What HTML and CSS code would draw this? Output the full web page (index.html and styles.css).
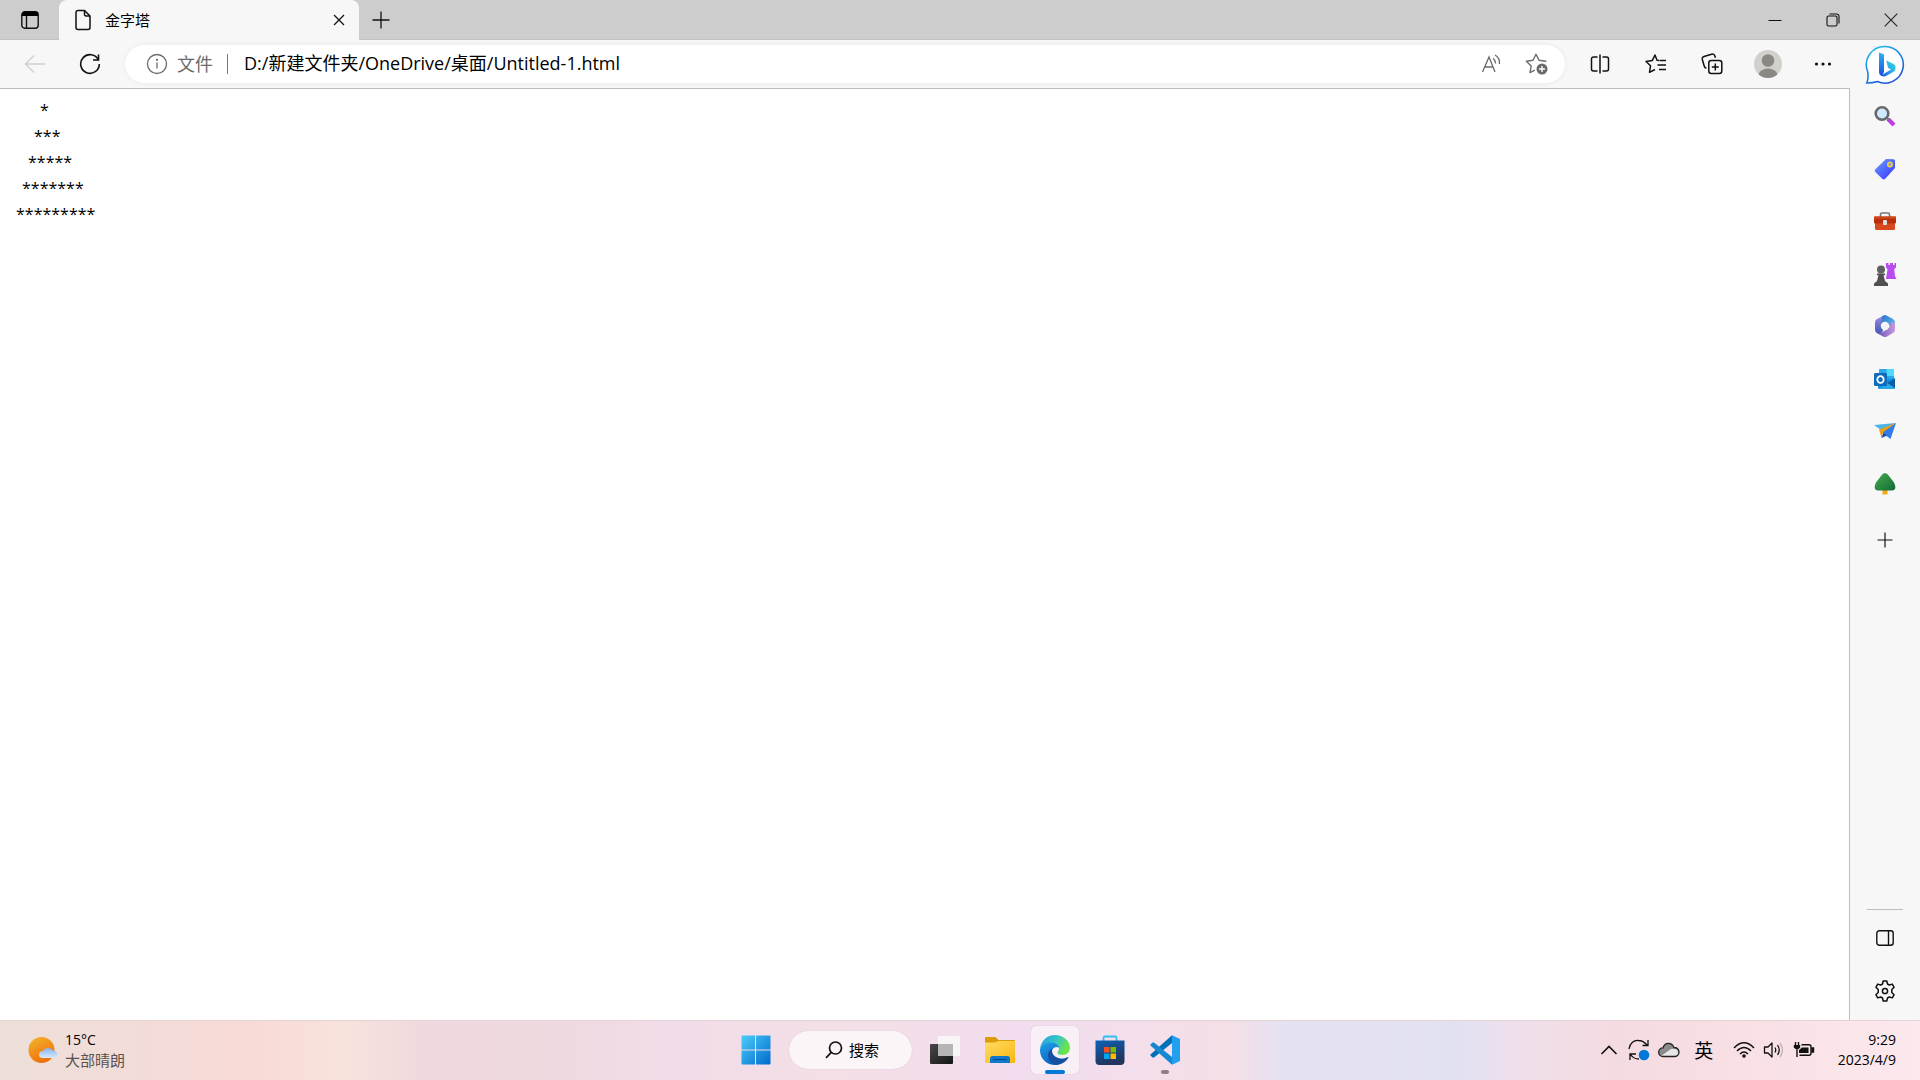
FILE: index.html
```
<!DOCTYPE html>
<html lang="zh-CN">
<head>
<meta charset="utf-8">
<meta name="viewport" content="width=device-width, initial-scale=1">
<title>金字塔</title>
<link rel="stylesheet" href="styles.css">
</head>
<body>
<div class="desktop">
  <header class="titlebar">
    <button class="tab-menu" aria-label="标签操作菜单">
      <svg width="18" height="18" viewBox="0 0 18 18" fill="none" stroke="#111" stroke-width="1.4"><rect x=".8" y=".8" width="16.4" height="16.4" rx="3"/><path d="M1 3.5a3 3 0 0 1 3-3h10a3 3 0 0 1 3 3V5H1z" fill="#000" stroke="none"/><path d="M5.5 5v12"/></svg>
    </button>
    <div class="tab">
      <svg width="18" height="22" viewBox="0 0 18 22" fill="none" stroke="#111" stroke-width="1.5" stroke-linejoin="round"><path d="M4 1.5h6.5L16 7v11.5a2 2 0 0 1-2 2H4a2 2 0 0 1-2-2v-15a2 2 0 0 1 2-2z"/><path d="M10.500 1.500V5.500a1.500 1.500 0 0 0 1.500 1.500H16"/></svg>
      <span class="tab-title">金字塔</span>
      <button class="tab-close" aria-label="关闭标签页"><svg width="12" height="12" viewBox="0 0 12 12" fill="none" stroke="#111" stroke-width="1.3"><path d="M1 1l10 10M11 1L1 11"/></svg></button>
    </div>
    <button class="new-tab" aria-label="新建标签页"><svg width="18" height="18" viewBox="0 0 18 18" fill="none" stroke="#111" stroke-width="1.3"><path d="M9 .5v17M.5 9h17"/></svg></button>
    <div class="window-buttons">
      <button aria-label="最小化"><svg width="14" height="14" viewBox="0 0 14 14" stroke="#111"><path d="M.5 7.500h13"/></svg></button>
      <button aria-label="还原"><svg width="14" height="14" viewBox="0 0 14 14" fill="none" stroke="#111" stroke-width="1.100"><rect x="1" y="3" width="10" height="10" rx="1.500"/><path d="M3.500 1h7a2.500 2.500 0 0 1 2.500 2.500v7"/></svg></button>
      <button aria-label="关闭"><svg width="14" height="14" viewBox="0 0 14 14" fill="none" stroke="#222" stroke-width="1.100"><path d="M.7.7l12.600 12.600M13.300.7L.7 13.300"/></svg></button>
    </div>
  </header>

  <div class="browser">
    <div class="main">
      <nav class="toolbar">
        <button class="nav-button" aria-label="后退"><svg width="22" height="20" viewBox="0 0 22 20" fill="none" stroke="#d0d0d0" stroke-width="1.500"><path d="M21 10H2M10 1.500L1.500 10l8.500 8.500"/></svg></button>
        <button class="nav-button" aria-label="刷新"><svg width="22" height="22" viewBox="0 0 22 22" fill="none" stroke="#111" stroke-width="1.600"><path d="M19.400 7A9.300 9.300 0 1 0 20.300 11"/><path d="M19.500 1.500V7h-5.500"/></svg></button>
        <div class="address">
          <button class="site-info"><svg width="22" height="22" viewBox="0 0 22 22" fill="none" stroke="#6b6b6b" stroke-width="1.300"><circle cx="11" cy="11" r="9.500"/><path d="M11 9.500v6"/><circle cx="11" cy="6.800" r=".5" fill="#6b6b6b"/></svg><span>文件</span></button>
          <span class="separator"></span>
          <input class="url" type="text" aria-label="地址栏" value="D:/新建文件夹/OneDrive/桌面/Untitled-1.html">
          <button class="address-action" aria-label="大声朗读"><svg width="22" height="20" viewBox="0 0 22 20" fill="none" stroke="#6b6b6b" stroke-width="1.300"><path d="M1.500 18L8 3l6 15M3.500 13h8.500"/><path d="M12 4.500q2.500 1.500 2.500 5M14 1q5 3 4.500 9"/></svg></button>
          <button class="address-action" aria-label="添加到收藏夹"><svg width="24" height="22" viewBox="0 0 24 22" fill="none" stroke="#6b6b6b" stroke-width="1.400" stroke-linejoin="round"><path d="M20.500 9l.2-.8-6.700-1L11 1.200 8 7.200l-6.700 1 4.900 4.700L5 19.600l4.800-2.500"/><circle cx="17" cy="16" r="5.500" fill="#6b6b6b" stroke="none"/><path d="M17 13v6M14 16h6" stroke="#fff"/></svg></button>
        </div>
        <div class="tools">
          <button aria-label="拆分窗口"><svg width="20" height="20" viewBox="0 0 20 20" fill="none" stroke="#111" stroke-width="1.500"><path d="M7.500 3h-4a2 2 0 0 0-2 2v10a2 2 0 0 0 2 2h4M12.500 3h4a2 2 0 0 1 2 2v10a2 2 0 0 1-2 2h-4M10 .500v19"/></svg></button>
          <button aria-label="收藏夹"><svg width="22" height="20" viewBox="0 0 22 20" fill="none" stroke="#111" stroke-width="1.500" stroke-linejoin="round"><path d="M14 6.500l-2-.2L10 1 7.200 6.600 1 7.500l4.500 4.300-1 6.500L10 15.500M14.500 6.500H21M12.500 11H21M14 15.500h7"/></svg></button>
          <button aria-label="集锦"><svg width="22" height="22" viewBox="0 0 22 22" fill="none" stroke="#111" stroke-width="1.500"><rect x="7.800" y="7.500" width="13" height="13" rx="2.500"/><path d="M14.300 10.500v7M10.800 14h7M5.500 15c-1.400 0-2-.7-2.300-2L1.300 6.500C1 5 1.500 4 3 3.500l7.500-2.200c1.700-.5 3 0 3.500 2l.4 1.500"/></svg></button>
          <button aria-label="个人资料"><svg width="28" height="28" viewBox="0 0 28 28"><clipPath id="avatar"><circle cx="14" cy="14" r="14"/></clipPath><g clip-path="url(#avatar)"><path d="M0 0h28v28H0z" fill="#d2d0cd"/><circle cx="14" cy="10.500" r="6.300" fill="#8b8783"/><path d="M4 28c0-6 4-9.500 10-9.500S24 22 24 28z" fill="#8b8783"/></g></svg></button>
          <button class="more" aria-label="设置及其他"><svg width="18" height="18" viewBox="0 0 18 18" fill="#111"><circle cx="2.500" cy="9" r="1.600"/><circle cx="9" cy="9" r="1.600"/><circle cx="15.500" cy="9" r="1.600"/></svg></button>
        </div>
      </nav>
      <main class="page">
        <p class="row" style="--indent:4">*</p>
        <p class="row" style="--indent:3">***</p>
        <p class="row" style="--indent:2">*****</p>
        <p class="row" style="--indent:1">*******</p>
        <p class="row" style="--indent:0">*********</p>
      </main>
    </div>

    <aside class="sidebar">
      <button class="bing" aria-label="发现"><svg width="40" height="40" viewBox="0 0 40 40"><defs><linearGradient id="bing-ring" x1="0" y1="0" x2=".6" y2="1"><stop offset="0" stop-color="#18c6ee"/><stop offset="1" stop-color="#1c54d8"/></linearGradient><linearGradient id="bing-stem" x1="0" y1="0" x2="0" y2="1"><stop offset="0" stop-color="#2cb2f2"/><stop offset="1" stop-color="#1b4fdd"/></linearGradient><linearGradient id="bing-bowl" x1="1" y1="0" x2="0" y2="1"><stop offset="0" stop-color="#35e0d8"/><stop offset=".5" stop-color="#2aa9f0"/><stop offset="1" stop-color="#1c4fdc"/></linearGradient></defs><path d="M20 1.500A18.300 18.300 0 1 1 12.500 36.500C9 37.500 5 38 1.800 38 3.300 35 3.200 31 2.800 27A18.300 18.300 0 0 1 20 1.500z" fill="#fff" stroke="url(#bing-ring)" stroke-width="1.600"/><path d="M14 7.500l4.200 1.600c.6.300.8.700.8 1.300v16.500l-2 4.200c-2-.6-3-2.200-3-4z" fill="url(#bing-stem)"/><path d="M21.300 15.500l6.400 3.100c2.600 1.200 3.300 3 2.800 5.300-.2 1.200-1 2.200-2 2.900l-7 4c-2 1.100-4.200 1-5.700-.4L26 24.500l-3-1.800z" fill="url(#bing-bowl)"/></svg></button>
      <div class="apps">
        <button aria-label="搜索"><svg width="22" height="22" viewBox="0 0 22 22"><path d="M14 14l6 6" stroke="#bf3be8" stroke-width="4"/><path d="M12.500 12.500l2.500 2.500" stroke="#777" stroke-width="2"/><circle cx="8" cy="8.500" r="6.300" fill="#cdeaff" stroke="#686868" stroke-width="2.600"/></svg></button>
        <button aria-label="购物"><svg width="22" height="22" viewBox="0 0 22 22"><linearGradient id="tag" x1="0" y1="0" x2="1" y2="1"><stop offset="0" stop-color="#67a2ff"/><stop offset="1" stop-color="#3c2fff"/></linearGradient><path d="M12 1l7.500.2q1.500 0 1.500 1.500V10L11 21q-1.500 1-2.800-.3L1.300 14Q.2 12.700 1.300 11.300z" fill="url(#tag)"/><circle cx="16" cy="6.500" r="2.200" fill="#8d9ec9" stroke="#f4d33e" stroke-width="1.500"/></svg></button>
        <button aria-label="工具"><svg width="24" height="20" viewBox="0 0 24 20"><path d="M7.500 6V3.500q0-1.500 1.500-1.500h6q1.500 0 1.500 1.500V6" fill="none" stroke="#777" stroke-width="1.600"/><rect x="2" y="8" width="20" height="11" rx="1.500" fill="#d8481c"/><rect x="1" y="5.500" width="22" height="7" rx="1" fill="#b92f0c"/><rect x="1" y="5.500" width="22" height="2" fill="#cf4a18"/><rect x="10" y="9" width="4" height="5" rx=".8" fill="#ddd"/></svg></button>
        <button aria-label="游戏"><svg width="24" height="24" viewBox="0 0 24 24"><path d="M13 1h2.500v2H17V1h3v2h1.500V1H23v4.500l-1.800 1.700.8 6.800 1.500 3H13l1.500-9.800L13 5.500z" fill="#b94cf0"/><circle cx="8" cy="7.500" r="4" fill="#606060"/><path d="M4 11.500h8v1.700h-1.500L12 19l3 2.500V24H1v-2.500L4 19l1.500-5.800H4z" fill="#505050"/></svg></button>
        <button aria-label="Microsoft 365"><svg width="22" height="24" viewBox="0 0 22 24"><defs><linearGradient id="m365-left" x1="0" y1="0" x2="0" y2="1"><stop offset="0" stop-color="#a78be0"/><stop offset="1" stop-color="#3a58b8"/></linearGradient><linearGradient id="m365-right" x1="0" y1="0" x2="1" y2="1"><stop offset="0" stop-color="#2f6fcf"/><stop offset="1" stop-color="#62c8ee"/></linearGradient><linearGradient id="m365-base" x1="0" y1="0" x2="1" y2="0"><stop offset="0" stop-color="#6b4fb5"/><stop offset="1" stop-color="#c79ae0"/></linearGradient></defs><path d="M11 1L3 5Q1 6.200 1 8.500v7Q1 18 3 19l3 1.500 3-4V7z" fill="url(#m365-left)"/><path d="M8 2.200l1.500-.8q1.500-.8 3 0L19 5q2 1.200 2 3.500V15l-7-3.500L7.500 9z" fill="url(#m365-right)"/><path d="M21 9v6.500q0 2.500-2 3.500l-6 3.500q-2 1-4 0L3 19q5 0 8-2.500l5-4 1-5z" fill="url(#m365-base)"/><circle cx="11" cy="12" r="4.200" fill="#f7f7f7"/></svg></button>
        <button aria-label="Outlook"><svg width="22" height="22" viewBox="0 0 22 22"><rect x="5" y="1" width="15" height="16" rx="1" fill="#28a8ea"/><path d="M12.500 1H19q1 0 1 1v6h-7.500z" fill="#50d9ff"/><path d="M5 6h7.500v7H5z" fill="#0364b8"/><path d="M4 13l17-3v9.500q0 1.500-1.500 1.500h-14Q4 21 4 19.500z" fill="#1490df"/><path d="M21 10.500V20l-8-5z" fill="#0a5ba8"/><path d="M5 21l8-6 8 5.300-1 .7z" fill="#28a8ea"/><rect x="0" y="5" width="13" height="13" rx="1.200" fill="#0f6cbd"/><ellipse cx="6.500" cy="11.500" rx="3.200" ry="3.400" fill="none" stroke="#fff" stroke-width="1.800"/></svg></button>
        <button aria-label="投放"><svg width="22" height="18" viewBox="0 0 22 18"><path d="M0 3l22-2-15 7z" fill="#49b5e8"/><path d="M22 1l-5.500 16L6 9z" fill="#307de9"/><path d="M5 7.500L22 1 9.500 10 7.500 16z" fill="#eb9e18"/><path d="M7.500 16l2-5 3.500 2.500z" fill="#1747a8"/></svg></button>
        <button aria-label="电子树"><svg width="22" height="24" viewBox="0 0 22 24"><linearGradient id="tree" x1="0" y1="0" x2="1" y2="1"><stop offset="0" stop-color="#43ac4c"/><stop offset="1" stop-color="#146b36"/></linearGradient><path d="M8.500 17h5v5.500h-5z" fill="#f5a817"/><path d="M11 1q2 0 4 3l5 6.500Q23.500 17.800 18 18.500H4Q-1.500 17.800 2 10.500L7 4q2-3 4-3z" fill="url(#tree)"/></svg></button>
      </div>
      <button class="add" aria-label="自定义"><svg width="16" height="16" viewBox="0 0 16 16" stroke="#111" stroke-width="1.200"><path d="M8 .5v15M.5 8h15"/></svg></button>
      <div class="side-settings">
        <button aria-label="隐藏边栏"><svg width="18" height="16" viewBox="0 0 18 16" fill="none" stroke="#111" stroke-width="1.400"><rect x=".8" y=".8" width="16.400" height="14.400" rx="2.500"/><path d="M12.500 1v14"/></svg></button>
        <button aria-label="设置"><svg width="22" height="22" viewBox="0 0 22 22" fill="none" stroke="#111" stroke-width="1.500" stroke-linejoin="round"><circle cx="11" cy="11" r="2.600"/><path d="M9.200 1h3.600l.7 3 1.800 1 3-.9 1.800 3.200-2.300 2.200v3l2.300 2.200-1.800 3.200-3-.9-1.800 1-.7 3H9.200l-.7-3-1.800-1-3 .9-1.800-3.200 2.300-2.200v-3L1.900 7.300l1.800-3.200 3 .9 1.800-1z"/></svg></button>
      </div>
    </aside>
  </div>

  <footer class="taskbar">
    <button class="weather">
      <svg width="30" height="28" viewBox="0 0 30 28"><linearGradient id="sun" x1="0" y1="0" x2=".5" y2="1"><stop offset="0" stop-color="#f3b72b"/><stop offset="1" stop-color="#f0700c"/></linearGradient><linearGradient id="haze" x1="0" y1="0" x2="0" y2="1"><stop offset="0" stop-color="#86b4f2"/><stop offset="1" stop-color="#d7eafc"/></linearGradient><circle cx="13.500" cy="14" r="13" fill="url(#sun)"/><path d="M15 22a4 3.500 0 0 1 0-7 5.500 5.500 0 0 1 9.500-.5q4.500 0 4.500 3.700T25 22z" fill="url(#haze)"/></svg>
      <span class="weather-text"><span>15°C</span><span class="weather-state">大部晴朗</span></span>
    </button>
    <div class="pinned">
      <button class="task" aria-label="开始"><svg width="30" height="30" viewBox="0 0 30 30"><linearGradient id="win" x1="0" y1="0" x2="1" y2="1"><stop offset="0" stop-color="#4dcdf9"/><stop offset="1" stop-color="#0069cc"/></linearGradient><path d="M1.500 .5H14v14H.5v-13a1 1 0 0 1 1-1zM15 .5h13.500a1 1 0 0 1 1 1v13H15zM.5 15.500H14v14H1.500a1 1 0 0 1-1-1zM15 15.500h14.500v13a1 1 0 0 1-1 1H15z" fill="url(#win)"/></svg></button>
      <button class="search"><svg width="18" height="18" viewBox="0 0 18 18" fill="none" stroke="#111" stroke-width="1.700"><circle cx="10.500" cy="7" r="6"/><path d="M6.300 11.300L1 16.800"/></svg><span>搜索</span></button>
      <button class="task" aria-label="任务视图"><svg width="30" height="28" viewBox="0 0 30 28"><linearGradient id="desk" x1="0" y1="0" x2="1" y2="1"><stop offset="0" stop-color="#484848"/><stop offset="1" stop-color="#161616"/></linearGradient><rect y="8" width="23" height="20" rx="1" fill="url(#desk)"/><rect x="8" width="22" height="20" rx="1" fill="#f7f7f7" opacity=".9"/><path d="M8 8h15v12H8z" fill="#b5b5b5"/></svg></button>
      <button class="task" aria-label="文件资源管理器"><svg width="30" height="28" viewBox="0 0 30 28"><linearGradient id="folder" x1="0" y1="0" x2="1" y2="1"><stop offset="0" stop-color="#ffdc66"/><stop offset="1" stop-color="#f8b70e"/></linearGradient><path d="M1 1h8.500q1 0 1.700.8L13.500 4H29q1 0 1 1v5H0V2q0-1 1-1z" fill="#dc9b07"/><path d="M0 6.500h9.500L13.500 5H30v22H0z" fill="url(#folder)"/><path d="M5 27v-4.500Q5 20 7.500 20h15q2.500 0 2.500 2.500V27z" fill="#1078ca"/><path d="M8.500 23.500h13" stroke="#06488b"/></svg></button>
      <button class="task active" aria-label="Microsoft Edge"><svg width="30" height="30" viewBox="0 0 30 30"><defs><linearGradient id="edge-top" x1="0" y1="0" x2="1" y2=".4"><stop offset="0" stop-color="#249de0"/><stop offset=".55" stop-color="#35c5c8"/><stop offset="1" stop-color="#6be648"/></linearGradient><linearGradient id="edge-body" x1="0" y1="0" x2=".4" y2="1"><stop offset="0" stop-color="#21a1e8"/><stop offset="1" stop-color="#0b63c7"/></linearGradient></defs><path d="M0 14C1 6 7 0 15 0s15 5.800 15 12.500c0 4.800-3.500 7.500-7.500 7.500-3 0-5-1-5-2.300 0-1 1.500-1.500 1.500-4C19 11 16 8 11 8 5 8 1.500 11 0 14z" fill="url(#edge-top)"/><path d="M0 14.500C1 10 5 7.500 10.500 7.500c5.500 0 8.500 3 8.500 5.500-2-2-6.500-.5-7.500 3.500-1.500 6.500 4 12.500 9.500 11.500C18.500 30 16.500 30 15 30 6.500 30-.5 23 0 14.500z" fill="url(#edge-body)"/><path d="M12.500 13.500c-3 1-4.500 4-4.500 7 0 5 4.500 9.500 9.500 9.200 5-.6 8.500-3 10.700-6.700.4-.8-.2-1.200-.8-.8C21.500 25.500 12 22.500 12 15.500q0-1 .5-2z" fill="#14509f"/></svg></button>
      <button class="task" aria-label="Microsoft Store"><svg width="30" height="30" viewBox="0 0 30 30"><linearGradient id="store" x1="0" y1="0" x2=".4" y2="1"><stop offset="0" stop-color="#0d62b8"/><stop offset="1" stop-color="#21345c"/></linearGradient><path d="M8.500 7V3q0-1.500 1.500-1.500h10q1.500 0 1.500 1.500v4" fill="none" stroke="#30bfef" stroke-width="1.800"/><path d="M.5 5.500h29V26q0 4-4 4h-21q-4 0-4-4z" fill="url(#store)"/><path d="M9 12h5.500v5.500H9z" fill="#f25022"/><path d="M15.500 12H21v5.500h-5.500z" fill="#7fba00"/><path d="M9 18.500h5.500V24H9z" fill="#00a4ef"/><path d="M15.500 18.500H21V24h-5.500z" fill="#ffb900"/></svg></button>
      <button class="task open" aria-label="Visual Studio Code"><svg width="30" height="30" viewBox="0 0 30 30"><path d="M22 .300L30 4v22l-8 3.700z" fill="#22a0f0"/><path d="M0 20l2.500 2.500L4 22.400 22 8V.300L1 19z" fill="#0070b8"/><path d="M0 10l2.500-2.500L4 7.600 22 22v7.700L1 11z" fill="#1488d2"/></svg></button>
    </div>
    <div class="tray">
      <button aria-label="显示隐藏的图标"><svg width="18" height="12" viewBox="0 0 18 12" fill="none" stroke="#111" stroke-width="1.600"><path d="M1.500 10L9 2.500l7.500 7.500"/></svg></button>
      <button aria-label="更新"><svg width="22" height="22" viewBox="0 0 22 22" fill="none" stroke="#111" stroke-width="1.300"><path d="M1 10C2 4 6 1 10.500 1.500c3.500 0 6 1.500 8.500 4.500M20 1v5.500h-5.500M2 21v-6h6M2.500 15.500q3 4.500 8.500 4.500"/><circle cx="16" cy="16" r="5.300" fill="#0078d7" stroke="none"/></svg></button>
      <button aria-label="OneDrive"><svg width="22" height="16" viewBox="0 0 22 16"><path d="M5 14.500a4.300 4.300 0 0 1 0-8.600C7 0 13.500 0 16 5.500c3 0 5 2 5 4.500s-2 4.500-4.500 4.500z" fill="#8b8b8b"/><path d="M3 14l10-7q7-1 7 3.500 0 4-4 4H5z" fill="#e7e7e7"/><path d="M5 14.500a4.300 4.300 0 0 1 0-8.600C7 0 13.500 0 16 5.500c3 0 5 2 5 4.500s-2 4.500-4.500 4.500z" fill="none" stroke="#222" stroke-width="1.300"/></svg></button>
      <button class="ime">英</button>
      <button class="status" aria-label="网络、音量和电池">
        <svg width="22" height="18" viewBox="0 0 22 18" fill="none" stroke="#111" stroke-width="1.500"><path d="M1 7Q11-3.500 21 7M4 10q7-7 14 0M7 13q4-4 8 0"/><circle cx="11" cy="15" r="1.800" fill="#111" stroke="none"/></svg>
        <svg width="22" height="18" viewBox="0 0 22 18" fill="none" stroke="#111" stroke-width="1.300" stroke-linejoin="round"><path d="M1.500 6H5l4-4v14l-4-4H1.500zM12 6.500q1.500 2.500 0 5M14.500 4q3.500 5 0 10"/><path d="M17 2q5 7 0 14" stroke="#bdb2b6"/></svg>
        <svg width="22" height="18" viewBox="0 0 22 18" fill="none" stroke="#111" stroke-width="1.400"><path d="M8.500 3.700h7.500q2 0 2 2v6.600q0 2-2 2H6.500"/><path d="M9 6.500h6.500v5.500H6V9z" fill="#111" stroke="none"/><path d="M19 7h1.500v4H19z" fill="#111"/><path d="M.8 4h6.400v2.500L5.500 8h-3L.8 6.500z" fill="#111" stroke="none"/><path d="M2.500 1v3M5.500 1v3M4 8v8"/></svg>
      </button>
      <button class="clock"><time>9:29</time><time>2023/4/9</time></button>
    </div>
  </footer>
</div>
</body>
</html>
```
FILE: styles.css
```
* {
  box-sizing: border-box;
}

body {
  margin: 0;
  color: #000;
  font-family: "Open Sans", "Noto Sans CJK SC", sans-serif;
}

button,
input {
  margin: 0;
  padding: 0;
  border: 0;
  background: none;
  color: inherit;
  font: inherit;
}

button {
  display: flex;
  align-items: center;
  justify-content: center;
}

svg {
  display: block;
  flex: none;
}

.desktop {
  display: flex;
  flex-direction: column;
  min-height: 100vh;
}

/* Title bar */
.titlebar {
  display: flex;
  height: 40px;
  background: #cdcdcd;
  box-shadow: inset 0 -1px #c2c2c2;
}

.tab-menu {
  width: 59px;
}

.tab {
  display: flex;
  align-items: center;
  gap: 13px;
  width: 300px;
  padding: 0 12px 0 15px;
  border-radius: 8px 8px 0 0;
  background: #f7f7f7;
}

.tab-title {
  flex: 1;
  font-size: 15px;
  line-height: 20px;
}

.tab-close {
  width: 16px;
  height: 24px;
}

.new-tab {
  width: 44px;
}

.window-buttons {
  display: flex;
  margin-left: auto;
}

.window-buttons button {
  width: 58px;
}

/* Browser */
.browser {
  display: flex;
  flex: 1;
  background: #f7f7f7;
}

.main {
  display: flex;
  flex: 1;
  flex-direction: column;
  min-width: 0;
}

.toolbar {
  display: flex;
  align-items: center;
  height: 48px;
  padding-left: 7px;
}

.nav-button {
  width: 55px;
  height: 40px;
}

.address {
  display: flex;
  flex: 1;
  align-items: center;
  height: 38px;
  margin-left: 8px;
  padding: 0 16px 0 21px;
  border-radius: 19px;
  background: #fff;
  box-shadow: 0 0 4px #e6e6e6;
  font-size: 18px;
}

.site-info {
  gap: 9px;
  color: #6b6b6b;
}

.site-info span {
  padding-bottom: 2px;
}

.separator {
  width: 1px;
  height: 20px;
  margin: 0 16px 0 14px;
  background: #777;
}

.url {
  flex: 1;
  min-width: 0;
  height: 34px;
  padding-bottom: 4px;
}

.address-action {
  width: 24px;
  margin-left: 21px;
}

.tools {
  display: flex;
  align-items: center;
  padding-left: 7px;
}

.tools button {
  width: 56px;
  height: 40px;
}

.tools .more {
  width: 54px;
}

.page {
  flex: 1;
  padding: 8px 8px 8px 16px;
  border-top: 1px solid #bdbdbd;
  border-right: 1px solid #bdbdbd;
  background: #fff;
}

.row {
  margin: 0;
  padding-left: calc(var(--indent) * 6px);
  font-size: 16px;
  line-height: 26px;
}

/* Sidebar */
.sidebar {
  display: flex;
  flex-direction: column;
  width: 70px;
}

.bing {
  height: 50px;
}

.apps {
  display: flex;
  flex-direction: column;
  height: 420px;
}

.apps button {
  flex: 1;
}

.add {
  height: 60px;
}

.side-settings {
  display: flex;
  flex-direction: column;
  margin: auto 17px 0;
  padding: 1px 0 3px;
  border-top: 1px solid #bdbdbd;
}

.side-settings button {
  height: 53px;
}

/* Taskbar */
.taskbar {
  display: grid;
  grid-template-columns: 1fr auto 1fr;
  align-items: center;
  height: 60px;
  background: linear-gradient(90deg, #eedfd9 0%, #f2dcd8 7%, #f8dad6 13%, #f8e2dc 18%, #efd9de 22%, #eed9df 28%, #f1dce9 35%, #f3dfe6 43%, #f2ddef 54%, #f4dfe7 64%, #e4e2f2 67%, #e2e1f2 76%, #efdfeb 79%, #f4dbe1 84%, #f8dfe4 90%, #fce9ed 100%);
  box-shadow: inset 0 1px #e6d3d5;
}

.weather {
  gap: 7px;
  justify-self: start;
  padding-left: 28px;
}

.weather-text,
.clock {
  display: flex;
  flex-direction: column;
  font-size: 14px;
  line-height: 20px;
}

.weather-text {
  align-items: flex-start;
}

.weather-state {
  color: #5b5351;
  font-size: 15px;
}

.pinned {
  display: flex;
  align-items: center;
  gap: 7px;
}

.task {
  position: relative;
  width: 48px;
  height: 48px;
  border-radius: 5px;
}

.task.active {
  background: #f9f0f7;
  box-shadow: 0 0 1px #bfaebb;
}

.task.active::after,
.task.open::after {
  position: absolute;
  bottom: 0;
  width: 20px;
  height: 4px;
  border-radius: 2px;
  background: #0078d7;
  content: "";
}

.task.open::after {
  width: 8px;
  background: #8a8185;
}

.search {
  gap: 6px;
  width: 123px;
  height: 38px;
  margin: 0 2px;
  padding-left: 4px;
  border-radius: 19px;
  background: #fbf5f7;
  box-shadow: 0 0 1px #c9b8bf;
  font-size: 15px;
  line-height: 20px;
}

.tray {
  display: flex;
  align-items: center;
  justify-self: end;
  padding-right: 24px;
}

.tray button {
  min-width: 30px;
  height: 48px;
}

.tray .ime {
  width: 40px;
  font-size: 19px;
}

.tray .status {
  gap: 8px;
  margin-left: 9px;
}

.tray .clock {
  align-items: flex-end;
  margin-left: 23px;
}
```
